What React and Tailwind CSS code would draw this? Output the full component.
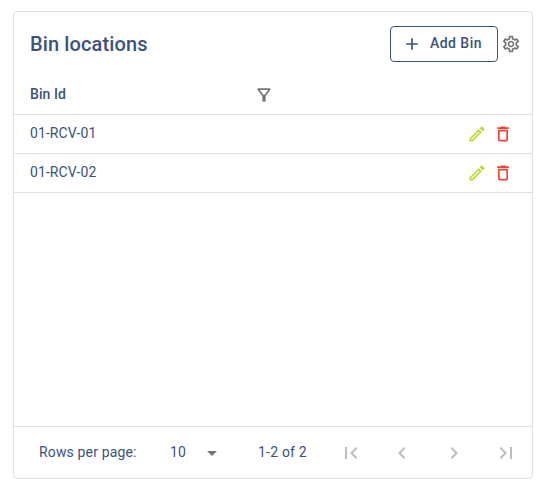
import React from "react";
import {
  MdAdd,
  MdArrowDropDown,
  MdChevronLeft,
  MdChevronRight,
  MdDeleteOutline,
  MdFirstPage,
  MdLastPage,
  MdOutlineFilterAlt,
  MdOutlineModeEdit,
  MdOutlineSettings,
} from "react-icons/md";

const bins = [{ id: "01-RCV-01" }, { id: "01-RCV-02" }];

const pageButtons = [
  { label: "First page", Icon: MdFirstPage },
  { label: "Previous page", Icon: MdChevronLeft },
  { label: "Next page", Icon: MdChevronRight },
  { label: "Last page", Icon: MdLastPage },
];

const App = () => {
  return (
    <div className="h-[492px] bg-white pt-[11px] pl-[13px] font-['Roboto',sans-serif] text-[#3b527c]">
      <div className="flex h-[468px] w-[520px] flex-col rounded border border-[#e0e0e0]">
        {/* Toolbar */}
        <div className="flex h-[63px] items-center pr-[11px] pl-4">
          <h2 className="flex-1 text-xl font-medium tracking-[0.13px]">
            Bin locations
          </h2>
          <button className="flex h-9 w-[108px] items-center rounded border border-[#3b527c] pl-[11px] text-sm font-medium tracking-[0.45px]">
            <MdAdd size={20} className="mr-2" />
            <span className="pb-0.5">Add Bin</span>
          </button>
          <button aria-label="Settings" className="ml-[3px] text-[#757575]">
            <MdOutlineSettings size={20} />
          </button>
        </div>

        {/* Table */}
        <div className="flex h-10 items-center border-b border-[#e0e0e0] pl-4 text-sm font-medium tracking-[0.05px]">
          <span className="w-[224px] pb-0.5">Bin Id</span>
          <MdOutlineFilterAlt size={20} className="text-[#757575]" />
        </div>
        {bins.map((bin) => (
          <div
            key={bin.id}
            className="flex h-[39px] items-center border-b border-[#e0e0e0] pr-[19px] pl-4 text-sm tracking-[0.08px]"
          >
            <span className="flex-1 pb-0.5">{bin.id}</span>
            <div className="flex gap-1.5">
              <button aria-label="Edit" className="text-[#c0d72f]">
                <MdOutlineModeEdit size={20} />
              </button>
              <button aria-label="Delete" className="text-[#f44336]">
                <MdDeleteOutline size={20} />
              </button>
            </div>
          </div>
        ))}

        {/* Pagination */}
        <div className="mt-auto flex h-[52px] items-center border-t border-[#e0e0e0] pl-[25px] text-sm tracking-[0.15px]">
          <span className="w-[131px] pb-0.5">Rows per page:</span>
          <span className="w-[30px] pb-0.5 tracking-[0.25px]">10</span>
          <MdArrowDropDown size={24} className="text-[#757575]" />
          <span className="ml-[34px] w-[80.8px] pb-0.5 tracking-[0.2px]">
            1-2 of 2
          </span>
          <div className="flex gap-[27.6px] text-[#bdbdbd]">
            {pageButtons.map(({ label, Icon }) => (
              <button key={label} aria-label={label}>
                <Icon size={24} />
              </button>
            ))}
          </div>
        </div>
      </div>
    </div>
  );
};

export default App;
